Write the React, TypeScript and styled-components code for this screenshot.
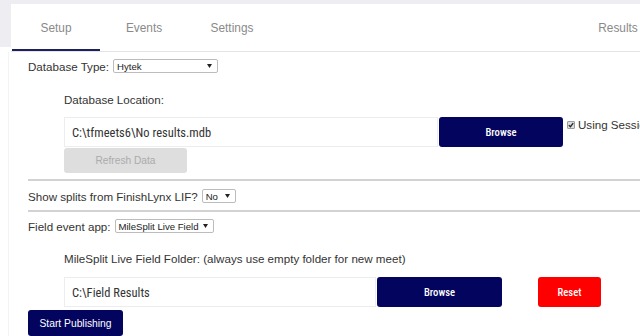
import React from "react";
import styled, { createGlobalStyle } from "styled-components";

const NAVY = "#03045e";

const GlobalStyle = createGlobalStyle`
  html, body { margin: 0; padding: 0; background: #fff; overflow: hidden; }
  body {
    width: 640px;
    height: 336px;
    font-family: "Liberation Sans", Arial, sans-serif;
  }
  #root { width: 640px; height: 336px; overflow: hidden; }
`;

const Header = styled.header`
  background: linear-gradient(#eeeef2, #eeeef2) no-repeat;
  background-size: 100% 47px;
  padding: 4px 0 0 11px;
`;

const TabList = styled.nav`
  display: flex;
  height: 47px;
  padding-left: 1px;
  background: #fff;
  border-bottom: 1px solid #e4e4e6;
  white-space: nowrap;
`;

const Tab = styled.div<{ $active?: boolean; $push?: number }>`
  flex: 0 0 88px;
  box-sizing: border-box;
  display: flex;
  align-items: center;
  justify-content: center;
  padding-top: 3px;
  margin-left: ${(p) => p.$push ?? 0}px;
  font-size: 11.85px;
  color: #8a8a8a;
  border-bottom: 2px solid ${(p) => (p.$active ? "#1d205e" : "transparent")};
`;

const Content = styled.main`
  display: flex;
  flex-direction: column;
  margin-left: 8px;
  padding-left: 19px;
  border-left: 1px solid #f3f3f3;
  font-size: 11.6px;
  color: #333;
  white-space: nowrap;
`;

const FieldRow = styled.div<{ $mt: number }>`
  display: flex;
  align-items: center;
  gap: 4px;
  height: 14px;
  margin-top: ${(p) => p.$mt}px;
`;

const SelectBox = styled.div<{ $w: number }>`
  box-sizing: border-box;
  display: flex;
  align-items: center;
  justify-content: space-between;
  flex: 0 0 ${(p) => p.$w}px;
  height: 14px;
  padding: 0 5px 0 3px;
  background: #fff;
  border: 1px solid #bcbcbc;
  border-radius: 2px;
  font-size: 9.6px;
  color: #222;
`;

const Indent = styled.div`
  display: flex;
  flex-direction: column;
  padding-left: 36px;
`;

const SubLabel = styled.div<{ $mt: number }>`
  line-height: 14px;
  margin-top: ${(p) => p.$mt}px;
`;

const InputRow = styled.div<{ $mt: number }>`
  display: flex;
  align-items: flex-start;
  margin-top: ${(p) => p.$mt}px;
`;

const PathInput = styled.input<{ $w: number }>`
  box-sizing: border-box;
  flex: 0 0 ${(p) => p.$w}px;
  width: ${(p) => p.$w}px;
  height: 30px;
  margin: 0;
  padding: 0 7px;
  border: 1px solid #ededed;
  background: #fff;
  outline: none;
  font-family: "Roboto Condensed", Roboto, sans-serif;
  font-size: 12.5px;
  color: #333;
`;

const ActionButton = styled.button<{ $w: number; $tone?: "navy" | "red"; $ml?: number }>`
  box-sizing: border-box;
  flex: 0 0 ${(p) => p.$w}px;
  height: 30px;
  margin: 0 0 0 ${(p) => p.$ml ?? 1}px;
  padding: 0;
  border: none;
  border-radius: 3px;
  background: ${(p) => (p.$tone === "red" ? "#ff0000" : NAVY)};
  color: #fff;
  font-family: "Roboto Condensed", Roboto, sans-serif;
  font-size: 10.6px;
  font-weight: 500;
`;

const CheckGroup = styled.label`
  display: flex;
  flex: 0 0 auto;
  align-items: center;
  gap: 3px;
  margin: 1px 0 0 4px;
  line-height: 14px;
  font-size: 11.6px;
  color: #333;
`;

const CheckBox = styled.span`
  box-sizing: border-box;
  display: flex;
  align-items: center;
  justify-content: center;
  width: 8px;
  height: 8px;
  flex: 0 0 8px;
  background: #dcdcdc;
  border: 1px solid #9c9c9c;
  border-radius: 1px;
`;

const RefreshButton = styled.button`
  width: 123px;
  height: 25px;
  margin: 1px 0 0;
  padding: 0;
  border: none;
  border-radius: 3px;
  background: #dedede;
  color: #ababab;
  font-family: "Liberation Sans", Arial, sans-serif;
  font-size: 10.2px;
  align-self: flex-start;
`;

const Divider = styled.hr<{ $mt: number }>`
  margin: ${(p) => p.$mt}px 0 0;
  height: 0;
  border: 0;
  border-top: 2px solid #d2d2d2;
`;

const PublishButton = styled.button`
  align-self: flex-start;
  width: 95px;
  height: 26px;
  margin: 3px 0 0;
  padding: 0;
  border: none;
  border-radius: 3px;
  background: ${NAVY};
  color: #fff;
  font-family: "Liberation Sans", Arial, sans-serif;
  font-size: 10.3px;
`;

const Arrow = () => (
  <svg width="5" height="4" viewBox="0 0 5 4">
    <path d="M0 0 H5 L2.5 4 Z" fill="#222" />
  </svg>
);

const Check = () => (
  <svg width="6" height="6" viewBox="0 0 6 6">
    <path d="M0.8 3.1 L2.4 4.7 L5.2 1.2" fill="none" stroke="#222" strokeWidth="1.3" />
  </svg>
);

const Select = ({ w, value }: { w: number; value: string }) => (
  <SelectBox $w={w}>
    <span>{value}</span>
    <Arrow />
  </SelectBox>
);

export default function App() {
  return (
    <>
      <GlobalStyle />
      <Header>
        <TabList>
          <Tab $active>Setup</Tab>
          <Tab>Events</Tab>
          <Tab>Settings</Tab>
          <Tab $push={298}>Results</Tab>
        </TabList>
      </Header>
      <Content>
        <FieldRow $mt={7}>
          <span>Database Type:</span>
          <Select w={105} value="Hytek" />
        </FieldRow>
        <Indent>
          <SubLabel $mt={20}>Database Location:</SubLabel>
          <InputRow $mt={10}>
            <PathInput $w={374} readOnly value="C:\tfmeets6\No results.mdb" />
            <ActionButton $w={124}>Browse</ActionButton>
            <CheckGroup>
              <CheckBox>
                <Check />
              </CheckBox>
              Using Sessions
            </CheckGroup>
          </InputRow>
          <RefreshButton>Refresh Data</RefreshButton>
        </Indent>
        <Divider $mt={6} />
        <FieldRow $mt={8}>
          <span>Show splits from FinishLynx LIF?</span>
          <Select w={34} value="No" />
        </FieldRow>
        <Divider $mt={7} />
        <FieldRow $mt={7}>
          <span>Field event app:</span>
          <Select w={99} value="MileSplit Live Field" />
        </FieldRow>
        <Indent>
          <SubLabel $mt={19}>MileSplit Live Field Folder: (always use empty folder for new meet)</SubLabel>
          <InputRow $mt={11}>
            <PathInput $w={312} readOnly value="C:\Field Results" />
            <ActionButton $w={125}>Browse</ActionButton>
            <ActionButton $w={63} $tone="red" $ml={36}>
              Reset
            </ActionButton>
          </InputRow>
        </Indent>
        <PublishButton>Start Publishing</PublishButton>
      </Content>
    </>
  );
}
